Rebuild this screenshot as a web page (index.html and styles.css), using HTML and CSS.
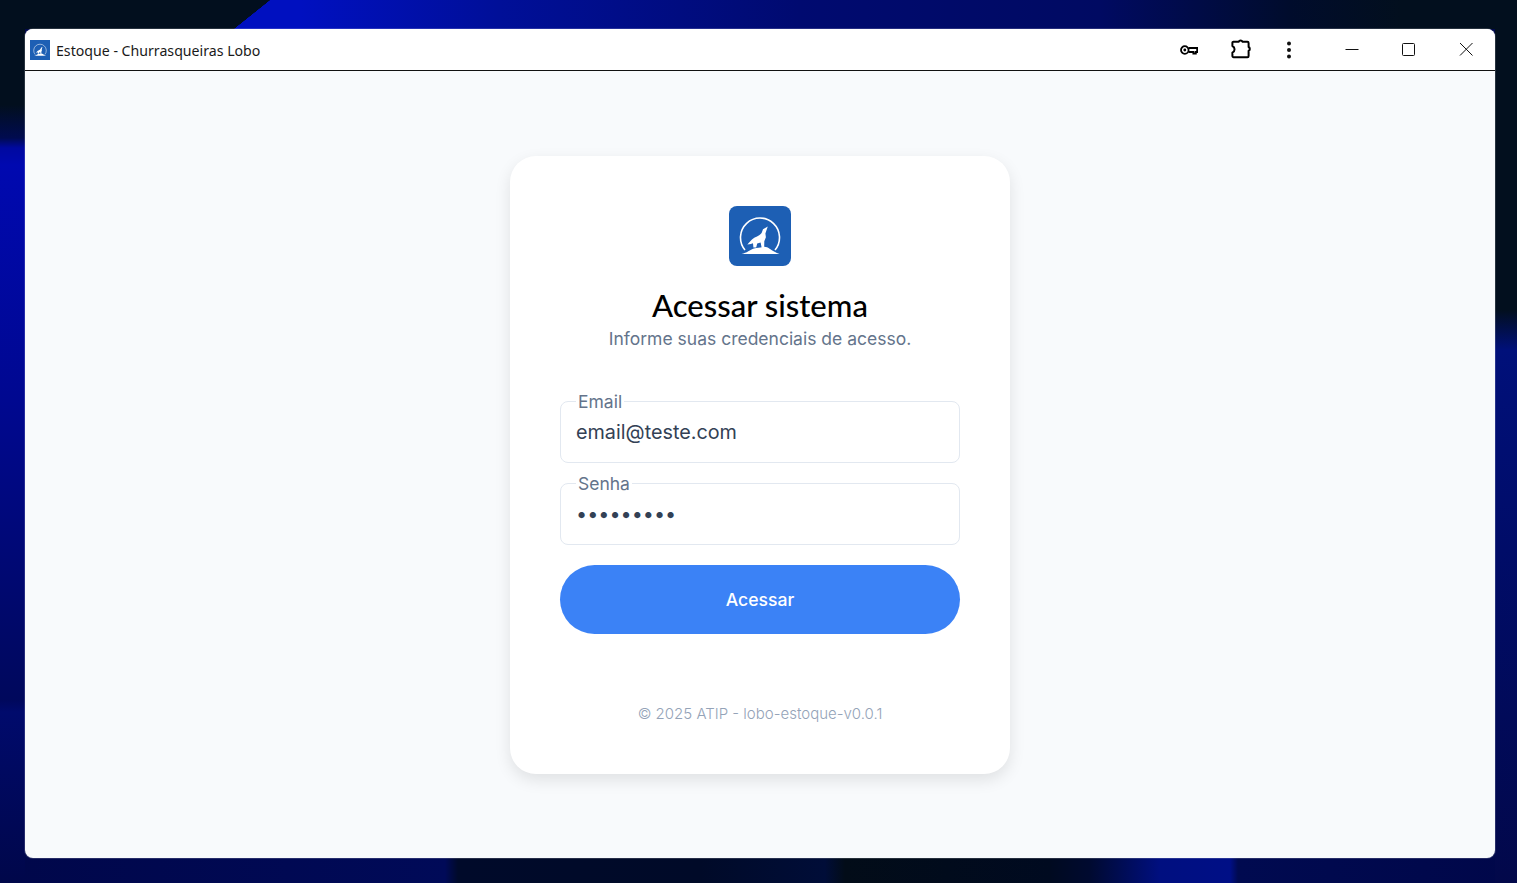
FILE: index.html
```html
<!DOCTYPE html>
<html lang="pt-BR">
<head>
    <meta charset="UTF-8">
    <meta name="viewport" content="width=device-width, initial-scale=1.0">
    <title>Estoque - Churrasqueiras Lobo</title>
    <link rel="stylesheet" href="styles.css">
</head>
<body>
    <svg class="defs" width="0" height="0" aria-hidden="true">
        <symbol id="wolf" viewBox="0 0 62 60">
            <path d="M16 44A19.5 19.5 0 1 1 46 44" fill="none" stroke="#fff" stroke-width="1.6"/>
            <path d="M38.8 20.5L34 23.2L32.6 27C31 28.8 29.5 30 27.5 30.8C25 31.8 23.2 33 22 34.6L18.3 38.6L21.8 37.9L24 37.2L24.4 41.5H27.2L28.2 37.6L31.6 36.6L32.6 41.5H35.2L35.3 35.2L36.9 31.2L36.4 27.5L37.4 24.6Z" fill="#fff"/>
            <path d="M12.5 47.9C18 46.8 21 43.8 25 42.4C28 41.5 31 41.9 33.5 41C36.5 40.4 38.5 41.4 41 43C44 44.9 47 46.8 50.5 47.9Z" fill="#fff"/>
        </symbol>
    </svg>

    <div class="window">
        <header class="titlebar">
            <svg class="app-icon"><use href="#wolf"/></svg>
            <span class="app-title">Estoque - Churrasqueiras Lobo</span>

            <div class="tools">
                <svg class="tool-key" width="18" height="12" viewBox="0 0 18 12">
                    <circle cx="4.8" cy="6" r="3.8" fill="none" stroke="#000" stroke-width="1.8"/>
                    <circle cx="4.8" cy="6" r="1.4" fill="#000"/>
                    <path d="M8.5 4H17.2V8H15.8V9.5H13.4V8H8.5" fill="none" stroke="#000" stroke-width="1.9"/>
                </svg>
                <svg class="tool-ext" width="20" height="20" viewBox="0 0 20 20">
                    <path d="M2.4 2.8H7.6A2.2 2.2 0 0 1 11.6 2.8H16.4A1.2 1.2 0 0 1 17.6 4V8A2.1 2.1 0 0 1 17.6 11.8V17A1.2 1.2 0 0 1 16.4 18.2H2.6A1.2 1.2 0 0 1 1.4 17V13.6A3.6 3.6 0 0 0 1.4 7V3.6A.9 .9 0 0 1 2.4 2.8Z" fill="none" stroke="#000" stroke-width="2" stroke-linejoin="round"/>
                </svg>
                <svg class="tool-more" width="4" height="18" viewBox="0 0 4 18">
                    <circle cx="2" cy="2.5" r="2" fill="#111"/>
                    <circle cx="2" cy="9" r="2" fill="#111"/>
                    <circle cx="2" cy="15.5" r="2" fill="#111"/>
                </svg>
            </div>

            <div class="win-controls">
                <button class="win-btn win-min" aria-label="Minimizar">
                    <svg width="14" height="14" viewBox="0 0 14 14"><path d="M0.5 7.5H13.5" stroke="#111"/></svg>
                </button>
                <button class="win-btn win-max" aria-label="Maximizar">
                    <svg width="14" height="14" viewBox="0 0 14 14"><rect x="1.5" y="1.5" width="12" height="12" rx="1" fill="none" stroke="#111"/></svg>
                </button>
                <button class="win-btn win-close" aria-label="Fechar">
                    <svg width="14" height="14" viewBox="0 0 14 14"><path d="M1 1L13.5 13.5M13.5 1L1 13.5" stroke="#111"/></svg>
                </button>
            </div>
        </header>

        <main class="content">
            <div class="login-card">
                <svg class="logo"><use href="#wolf"/></svg>
                <h1 class="login-title">Acessar sistema</h1>
                <p class="login-subtitle">Informe suas credenciais de acesso.</p>

                <form class="login-form">
                    <fieldset class="field">
                        <legend>Email</legend>
                        <input type="email" value="email@teste.com">
                    </fieldset>
                    <fieldset class="field">
                        <legend>Senha</legend>
                        <input type="password" value="123456789">
                    </fieldset>
                    <button type="button" class="submit-btn">Acessar</button>
                </form>

                <p class="login-footer">© 2025 ATIP - lobo-estoque-v0.0.1</p>
            </div>
        </main>
    </div>
</body>
</html>
```

FILE: styles.css
```css
html, body {
    height: 100%;
}

body {
    margin: 0;
    padding: 29px 22px 25px 25px;
    box-sizing: border-box;
    font-family: Inter, 'Liberation Sans', sans-serif;
    background-color: #00094a;
    background-repeat: no-repeat;
    /* wallpaper, only the strips round the window show */
    background-image:
        linear-gradient(141.34deg, #020f1e 168.6px, transparent 169px),
        linear-gradient(to right, #0010c0 0, #0010c0 300px, #000f98 500px, #000a70 800px, #000a62 1100px, #000c2c 1290px, #020f1e 1400px),
        linear-gradient(to bottom, #020f1e 0, #020f1e 105px, #000b50 138px, #0009a0 148px, #0009b0 165px, #000890 400px, #00085c 700px, #000a6c 712px, #00074a 883px),
        linear-gradient(to bottom, #020f1e 0, #020f1e 310px, #00107a 350px, #000c68 550px, #02084a 883px),
        linear-gradient(to right, #00074a 0, #000a58 445px, #000a2a 458px, #000a28 700px, #000d38 825px, #020c18 845px, #000a20 1050px, #000a30 1090px, #000f80 1160px, #000f86 1230px, #000a50 1238px, #00074a 1517px);
    background-size:
        300px 29px,
        100% 29px,
        25px 100%,
        22px 100%,
        100% 25px;
    background-position:
        0 0,
        0 0,
        0 0,
        100% 0,
        0 100%;
}

.defs {
    position: absolute;
}

.window {
    height: 100%;
    display: flex;
    flex-direction: column;
    border-radius: 8px;
    overflow: hidden;
    background-color: #f8fafc;
    box-shadow: 0 0 0 1px rgba(255, 255, 255, 0.15);
}

.titlebar {
    flex: none;
    height: 41px;
    display: flex;
    align-items: center;
    padding-left: 5px;
    background-color: white;
    border-bottom: 1px solid #111;
}

.app-icon {
    width: 20px;
    height: 20px;
    background-color: #1d5fb4;
}

.app-title {
    margin-left: 6px;
    margin-top: 1px;
    font-family: 'Noto Sans', 'Open Sans', sans-serif;
    font-size: 14.15px;
    color: #1a1a1a;
}

.tools {
    margin-left: auto;
    display: flex;
    align-items: center;
}

.tool-ext {
    margin-left: 33px;
    margin-bottom: 2px;
}

.tool-more {
    margin-left: 36px;
}

.win-controls {
    margin-left: 34px;
    display: flex;
    align-items: center;
}

.win-btn {
    height: 41px;
    padding: 0 0 1px;
    border: none;
    background: none;
    display: flex;
    align-items: center;
    justify-content: center;
}

.win-min {
    width: 54px;
}

.win-max {
    width: 58px;
}

.win-close {
    width: 58px;
}

.content {
    flex: 1;
    padding-top: 1px;
    display: flex;
    justify-content: center;
    align-items: center;
}

.login-card {
    width: 500px;
    padding: 50px;
    box-sizing: border-box;
    display: flex;
    flex-direction: column;
    align-items: center;
    background-color: white;
    border-radius: 26px;
    box-shadow: 0 6px 16px rgba(0, 0, 0, 0.1);
}

.logo {
    width: 62px;
    height: 60px;
    border-radius: 8px;
    background-color: #1d5fb4;
}

.login-title {
    margin: 23px 0 1px;
    font-family: Lato, sans-serif;
    font-size: 31px;
    line-height: 32px;
    font-weight: 500;
    color: #000;
}

.login-subtitle {
    margin: 7px 0 0;
    font-size: 17.5px;
    line-height: 20px;
    color: #64748b;
}

.login-form {
    width: 100%;
    margin-top: 42px;
    display: flex;
    flex-direction: column;
    gap: 10px;
}

.field {
    margin: 0;
    padding: 0 15px 10px;
    border: 1px solid #e2e8f0;
    border-radius: 8px;
}

.field legend {
    padding: 1px 2px 0;
    margin-bottom: -1px;
    font-size: 17.5px;
    line-height: 20px;
    color: #64748b;
}

.field input {
    width: 100%;
    height: 41px;
    padding: 0;
    border: none;
    outline: none;
    background: none;
    font-family: Inter, sans-serif;
    font-size: 19.8px;
    color: #334155;
}

.submit-btn {
    height: 69px;
    margin-top: 10px;
    border: none;
    border-radius: 35px;
    background-color: #3b82f6;
    color: white;
    font-family: Inter, sans-serif;
    font-size: 17.6px;
    font-weight: 500;
    cursor: pointer;
}

.login-footer {
    margin: 70px 0 0;
    font-size: 15px;
    font-weight: 300;
    line-height: 20px;
    color: #94a3b8;
}
```
